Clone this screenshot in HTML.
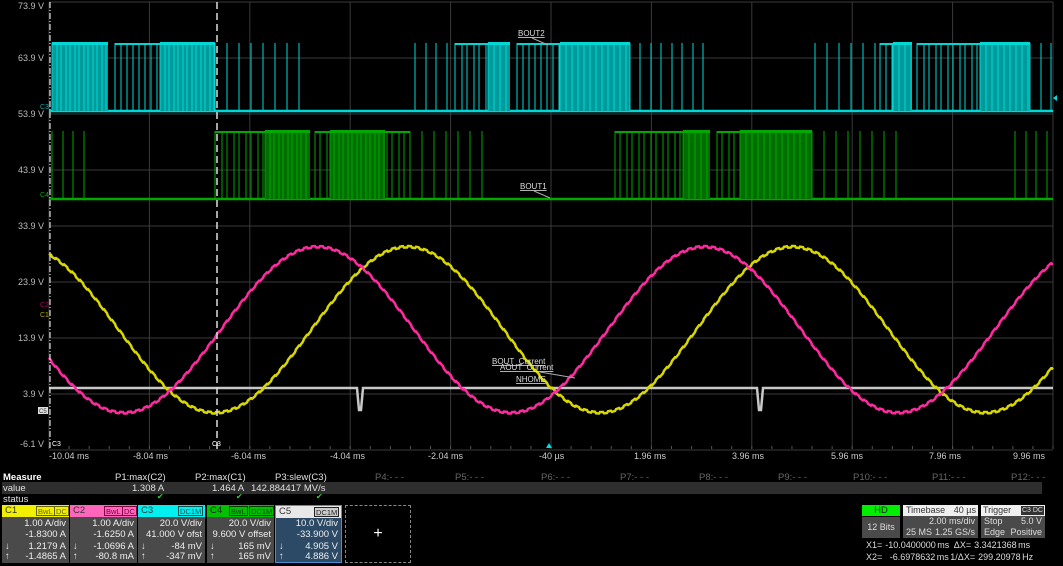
<!DOCTYPE html>
<html><head><meta charset="utf-8">
<style>
*{margin:0;padding:0;box-sizing:border-box}
body{width:1063px;height:566px;background:#000;overflow:hidden;font-family:"Liberation Sans",sans-serif;color:#ddd;position:relative}
.a{position:absolute;white-space:nowrap}
.yl{font-size:9px;color:#bbb;text-align:right;width:44px;left:0}
.xl{font-size:9px;color:#ccc;top:451px}
.m{font-size:9.5px;top:472px;color:#e0e0e0}
.pd{color:#666}
.box{position:absolute;top:505px;width:67px;height:58px;background:#4a4a4a;font-size:9.5px;line-height:10px;color:#eee;overflow:hidden}
.hd{height:12px;position:relative;font-size:9.5px;line-height:12px;padding-left:3px}
.tg{position:absolute;top:1px;height:10px;font-size:7.5px;line-height:9px;padding:0 1px;border:1px solid}
.r{position:absolute;right:3px}
.ar{position:absolute;left:3px}
</style></head><body>
<svg id="sv" class="a" style="left:0;top:0" width="1063" height="470"></svg>

<div class="a yl" style="top:1px">73.9 V</div>
<div class="a yl" style="top:53px">63.9 V</div>
<div class="a yl" style="top:109px">53.9 V</div>
<div class="a yl" style="top:165px">43.9 V</div>
<div class="a yl" style="top:221px">33.9 V</div>
<div class="a yl" style="top:277px">23.9 V</div>
<div class="a yl" style="top:333px">13.9 V</div>
<div class="a yl" style="top:389px">3.9 V</div>
<div class="a yl" style="top:439px">-6.1 V</div>

<div class="a xl" style="left:49px">-10.04 ms</div>
<div class="a xl" style="left:133px">-8.04 ms</div>
<div class="a xl" style="left:231px">-6.04 ms</div>
<div class="a xl" style="left:330px">-4.04 ms</div>
<div class="a xl" style="left:428px">-2.04 ms</div>
<div class="a xl" style="left:539px">-40 µs</div>
<div class="a xl" style="left:634px">1.96 ms</div>
<div class="a xl" style="left:732px">3.96 ms</div>
<div class="a xl" style="left:831px">5.96 ms</div>
<div class="a xl" style="left:929px">7.96 ms</div>
<div class="a xl" style="left:1013px">9.96 ms</div>

<div class="a" style="left:2px;top:482px;width:1040px;height:12px;background:#2e2e2e"></div>
<div class="a m" style="left:3px;font-weight:bold;color:#fff">Measure</div>
<div class="a m" style="left:115px">P1:max(C2)</div>
<div class="a m" style="left:195px">P2:max(C1)</div>
<div class="a m" style="left:275px">P3:slew(C3)</div>
<div class="a m pd" style="left:375px">P4:- - -</div>
<div class="a m pd" style="left:455px">P5:- - -</div>
<div class="a m pd" style="left:541px">P6:- - -</div>
<div class="a m pd" style="left:620px">P7:- - -</div>
<div class="a m pd" style="left:699px">P8:- - -</div>
<div class="a m pd" style="left:778px">P9:- - -</div>
<div class="a m pd" style="left:853px">P10:- - -</div>
<div class="a m pd" style="left:932px">P11:- - -</div>
<div class="a m pd" style="left:1011px">P12:- - -</div>
<div class="a m" style="left:3px;top:483px">value</div>
<div class="a m" style="left:132px;top:483px">1.308 A</div>
<div class="a m" style="left:212px;top:483px">1.464 A</div>
<div class="a m" style="left:251px;top:483px">142.884417 MV/s</div>
<div class="a m" style="left:3px;top:494px">status</div>
<div class="a m" style="left:157px;top:492px;color:#3c3;font-size:8px">✔</div>
<div class="a m" style="left:236px;top:492px;color:#3c3;font-size:8px">✔</div>
<div class="a m" style="left:316px;top:492px;color:#3c3;font-size:8px">✔</div>

<div class="box" style="left:2px"><div class="hd" style="background:#f0f000;color:#333">C1<span class="tg" style="left:34px;border-color:#660;color:#660">BwL</span><span class="tg" style="left:52px;border-color:#660;color:#660">DC</span></div>
<div class="r" style="top:14px">1.00 A/div</div><div class="r" style="top:25px">-1.8300 A</div>
<div class="ar" style="top:37px">↓</div><div class="r" style="top:37px">1.2179 A</div><div class="ar" style="top:47px">↑</div><div class="r" style="top:47px">-1.4865 A</div></div>
<div class="box" style="left:70px"><div class="hd" style="background:#ff66bb;color:#333">C2<span class="tg" style="left:34px;border-color:#800040;color:#800040">BwL</span><span class="tg" style="left:52px;border-color:#800040;color:#800040">DC</span></div>
<div class="r" style="top:14px">1.00 A/div</div><div class="r" style="top:25px">-1.6250 A</div>
<div class="ar" style="top:37px">↓</div><div class="r" style="top:37px">-1.0696 A</div><div class="ar" style="top:47px">↑</div><div class="r" style="top:47px">-80.8 mA</div></div>
<div class="box" style="left:138px"><div class="hd" style="background:#00f0f0;color:#333">C3<span class="tg" style="left:40px;border-color:#055;color:#055">DC1M</span></div>
<div class="r" style="top:14px">20.0 V/div</div><div class="r" style="top:25px">41.000 V ofst</div>
<div class="ar" style="top:37px">↓</div><div class="r" style="top:37px">-84 mV</div><div class="ar" style="top:47px">↑</div><div class="r" style="top:47px">-347 mV</div></div>
<div class="box" style="left:207px"><div class="hd" style="background:#00c000;color:#222">C4<span class="tg" style="left:22px;border-color:#040;color:#040">BwL</span><span class="tg" style="left:42px;border-color:#040;color:#040">DC1M</span></div>
<div class="r" style="top:14px">20.0 V/div</div><div class="r" style="top:25px">9.600 V offset</div>
<div class="ar" style="top:37px">↓</div><div class="r" style="top:37px">165 mV</div><div class="ar" style="top:47px">↑</div><div class="r" style="top:47px">165 mV</div></div>
<div class="box" style="left:275px;background:#2c4a66;border:1px solid #4a90d0"><div class="hd" style="background:#e8e8e8;color:#333">C5<span class="tg" style="left:38px;border-color:#222;color:#222;background:#ccc">DC1M</span></div>
<div class="r" style="top:13px">10.0 V/div</div><div class="r" style="top:24px">-33.900 V</div>
<div class="ar" style="top:36px">↓</div><div class="r" style="top:36px">4.905 V</div><div class="ar" style="top:46px">↑</div><div class="r" style="top:46px">4.886 V</div></div>
<div class="a" style="left:345px;top:505px;width:66px;height:58px;border:1px dashed #888;color:#fff;font-size:16px;text-align:center;line-height:56px">+</div>

<div class="a" style="left:862px;top:505px;width:38px;height:11px;background:#00ee00;color:#222;font-size:9.5px;text-align:center;line-height:11px">HD</div>
<div class="a" style="left:862px;top:517px;width:38px;height:21px;background:#4a4a4a;font-size:9px;text-align:center;line-height:21px">12 Bits</div>
<div class="a" style="left:903px;top:505px;width:75px;height:33px;background:#4a4a4a;font-size:9px">
<div style="background:#f0f0f0;color:#333;height:11px;line-height:11px;padding-left:3px">Timebase<span style="position:absolute;right:2px">40 µs</span></div>
<div class="r" style="top:11px">2.00 ms/div</div><div style="position:absolute;left:3px;top:22px">25 MS</div><div class="r" style="top:22px">1.25 GS/s</div></div>
<div class="a" style="left:981px;top:505px;width:64px;height:33px;background:#4a4a4a;font-size:9px">
<div style="background:#f0f0f0;color:#333;height:11px;line-height:11px;padding-left:2px">Trigger<span style="position:absolute;right:1px;top:1px;font-size:7px;line-height:9px;background:#333;color:#ddd;padding:0 1px">C3 DC</span></div>
<div style="position:absolute;left:3px;top:11px">Stop</div><div class="r" style="top:11px">5.0 V</div><div style="position:absolute;left:3px;top:22px">Edge</div><div class="r" style="top:22px">Positive</div></div>
<div class="a" style="left:866px;top:540px;font-size:9px;word-spacing:-1px">X1=&nbsp; -10.0400000 ms&nbsp;&nbsp; ΔX=&nbsp; 3.3421368 ms</div>
<div class="a" style="left:866px;top:552px;font-size:9px;word-spacing:-1px">X2=&nbsp;&nbsp;&nbsp;&nbsp; -6.6978632 ms 1/ΔX=&nbsp; 299.20978 Hz</div>

<script>
var s=document.getElementById('sv'),h='';
function L(x1,y1,x2,y2,c,w,e){h+='<line x1="'+x1+'" y1="'+y1+'" x2="'+x2+'" y2="'+y2+'" stroke="'+c+'" stroke-width="'+w+'" '+(e||'')+'/>';}
function R(x,y,w,hh,c){h+='<rect x="'+x+'" y="'+y+'" width="'+w+'" height="'+hh+'" fill="'+c+'"/>';}
for(var i=0;i<=10;i++){var x=49+i*100.4;L(x,2,x,449,'#3a3a3a',1);}
for(var j=0;j<=8;j++){var y=2+j*56;L(49,y,1053,y,'#3a3a3a',1);}
for(var k=0;k<=50;k++){var x=49+k*20.08;L(x,446,x,449,'#555',1);}
function burst(a,b,type,top,base,fill,line){
 if(type=='fill'){R(a,top,b-a,base-top,fill);L(a,top,b,top,line,2);}
 var st=type=='fill'?4:(type=='lines'?5:10);
 for(var x=a;x<b;x+=st+((x*7)%3)){L(x,top,x,base,line,1);}
 if(type!='sparse')L(a,top+1,b,top+1,line,2);
}
var C='#00d8d8',CF='#009a9a',G='#00a800',GF='#006e00';
L(49,111,1053,111,C,2.5);
[[52,108,'fill'],[115,215,'lines'],[160,215,'fill'],[215,300,'sparse'],[415,455,'sparse'],[455,510,'lines'],[488,510,'fill'],[517,605,'lines'],[560,630,'fill'],[630,705,'sparse'],[815,880,'sparse'],[880,912,'lines'],[893,912,'fill'],[917,1005,'lines'],[980,1030,'fill'],[1030,1052,'sparse']].forEach(function(r){burst(r[0],r[1],r[2],43,111,CF,C);});
L(49,199,1053,199,G,2.5);
[[52,90,'sparse'],[215,265,'lines'],[265,310,'fill'],[315,410,'lines'],[330,385,'fill'],[410,492,'sparse'],[615,710,'lines'],[683,710,'fill'],[717,812,'lines'],[740,812,'fill'],[812,905,'sparse'],[1015,1052,'sparse']].forEach(function(r){burst(r[0],r[1],r[2],131,199,GF,G);});
var p='';for(var x=49;x<=1053;x+=2){var y=388;if(Math.abs(x-360)<2||Math.abs(x-760)<2)y=410;p+=x+','+y+' ';}
h+='<polyline points="'+p+'" fill="none" stroke="#c8c8c8" stroke-width="2.5"/>';
function sine(ph,per,c,w){var p='';for(var x=49;x<=1053;x++){var y=329+83*Math.cos(2*Math.PI*(x-ph)/per);y+=((x%8)<4?0:1.5);p+=x+','+y.toFixed(1)+' ';}h+='<polyline points="'+p+'" fill="none" stroke="'+c+'" stroke-width="'+w+'"/>';}
sine(215,385,'#d8d800',2.5);sine(124,387,'#ff2aa0',2.5);
L(50,2,50,449,'#ddd',1.2,'stroke-dasharray="6,2,1,2"');
L(217,2,217,449,'#ddd',1.5,'stroke-dasharray="7,4"');
function T(x,y,t,c,sz,u){h+='<text x="'+x+'" y="'+y+'" fill="'+c+'" font-size="'+sz+'" font-family="Liberation Sans" '+(u?'text-decoration="underline"':'')+'>'+t+'</text>';}
T(518,36,'BOUT2','#ddd',8,1);L(532,38,548,45,'#aaa',1);
T(520,189,'BOUT1','#ddd',8,1);L(534,191,550,198,'#aaa',1);
T(492,364,'BOUT_Current','#ddd',8,1);T(500,370,'AOUT_Current','#ddd',8,1);T(516,382,'NHOME','#ddd',8,1);
L(540,372,575,378,'#aaa',1);
T(40,109,'C3','#0aa',7);T(40,197,'C4','#0a0',7);
T(52,446,'C3','#fff',7);T(212,446,'C3','#fff',7);
h+='<rect x="38" y="407" width="10" height="7" fill="#ddd"/>';T(39,413,'C5','#333',6);
T(40,317,'C1','#aa0',7);T(40,307,'C2','#a06',7);
h+='<polygon points="1053,98 1057,95 1057,101" fill="#0dd"/>';
h+='<polygon points="546,448 549,443 552,448" fill="#0dd"/>';
s.innerHTML=h;
</script>
</body></html>
